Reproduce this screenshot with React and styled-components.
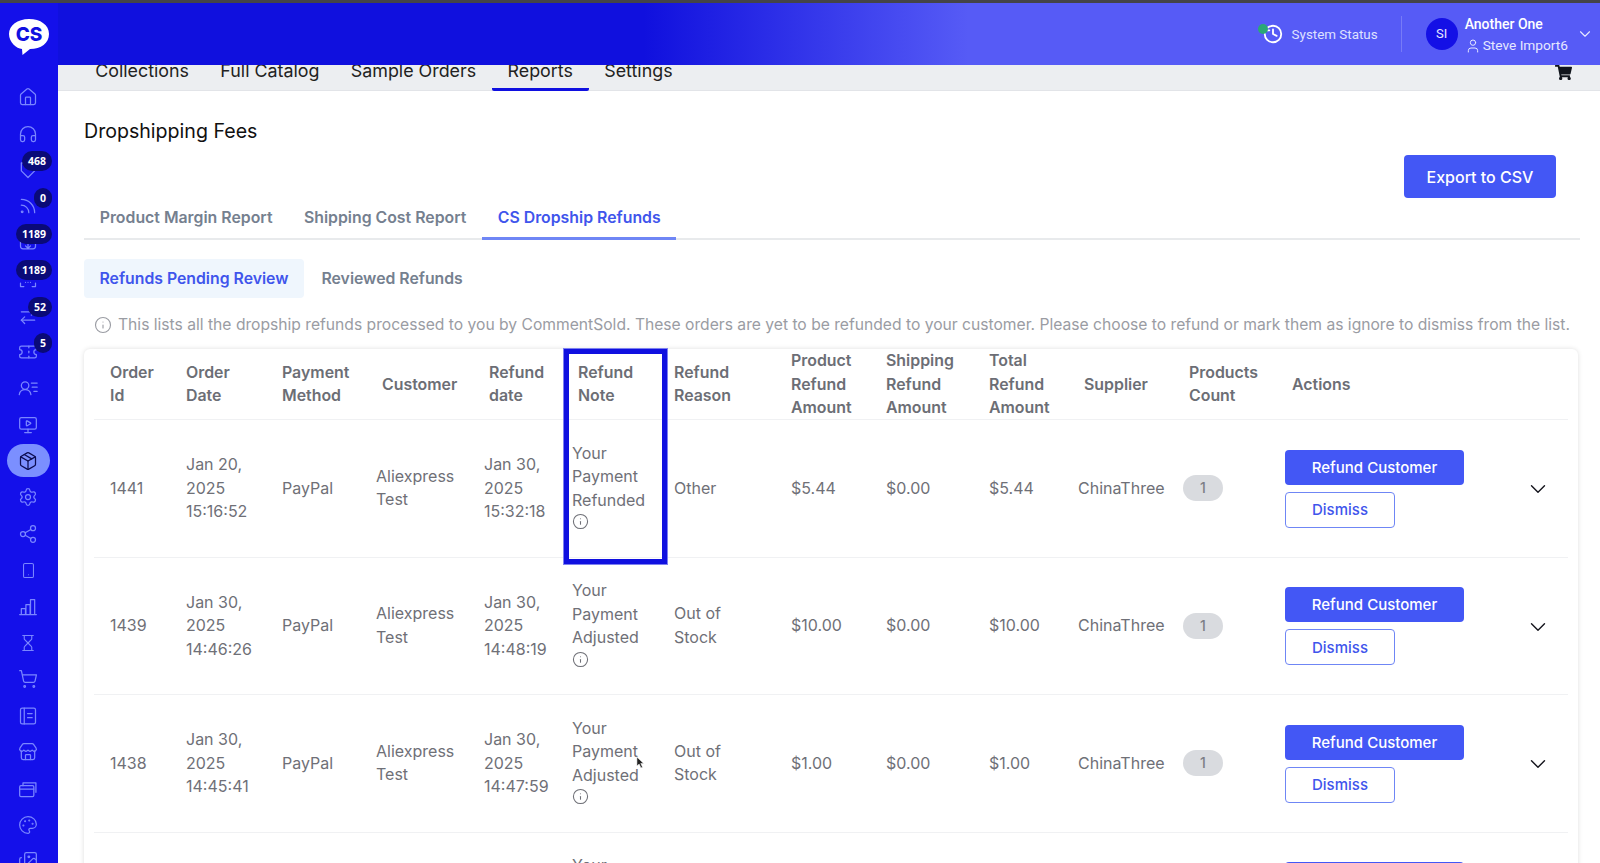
import React from 'react'
import styled, { createGlobalStyle } from 'styled-components'
import {
  House, Headphones, Rss, ArrowRightLeft, Ticket, MonitorPlay, Package,
  Settings, Share2, Smartphone, Hourglass, ShoppingCart, Store, Palette, Images, ChevronDown,
  User, History, Info,
} from 'lucide-react'
import { FaShoppingCart } from 'react-icons/fa'

const GlobalStyle = createGlobalStyle`
  html, body { margin: 0; padding: 0; background: #fff; }
  body { font-family: Inter, "Liberation Sans", sans-serif; overflow: hidden; }
  * { box-sizing: border-box; }
`

const Outline = ({ children, size, strokeWidth, ...rest }) => (
  <svg viewBox="0 0 24 24" width={size} height={size} fill="none" stroke="currentColor" strokeWidth={strokeWidth} strokeLinecap="round" strokeLinejoin="round" {...rest}>
    {children}
  </svg>
)

const TagDown = (props) => (
  <Outline {...props}><path d="M4 3.500v9.500l8 8 8-8V3.500z" /></Outline>
)

const BoxDown = (props) => (
  <Outline {...props}><path d="M3 4v12a3 3 0 003 3h12a3 3 0 003-3V4M12 9v9M9 15.500l3 3 3-3" /></Outline>
)

const ScanDots = (props) => (
  <Outline {...props}><path d="M3 17v4h4M17 21h4v-4M9 16h.01M12 16h.01M15 16h.01" /></Outline>
)

const UserLines = (props) => (
  <Outline {...props}>
    <circle cx="8.500" cy="9" r="4.500" />
    <path d="M1.500 20c.6-4 3.400-6 7-6s6.400 2 7 6M16 6h7M17 11h6M19 16h4" />
  </Outline>
)

const Bars = (props) => (
  <Outline {...props}><path d="M2 21h20M4 21v-7h5v7M9.500 21V9h5v12M15 21V3h5v18" /></Outline>
)

const Journal = (props) => (
  <Outline {...props}>
    <rect x="3" y="2.500" width="18" height="19" rx="2" />
    <path d="M7.500 2.500v19M11.500 9h5.500M11.500 14h5.500" />
  </Outline>
)

const Cards = (props) => (
  <Outline {...props}>
    <rect x="2" y="8" width="17" height="13" rx="1.500" />
    <path d="M2 12h17M6 4.500h15.500V16M6 4.500V8" />
  </Outline>
)

const navIcons = [
  { icon: House },
  { icon: Headphones },
  { icon: TagDown, badge: '468' },
  { icon: Rss, badge: '0' },
  { icon: BoxDown, badge: '1189' },
  { icon: ScanDots, badge: '1189' },
  { icon: ArrowRightLeft, badge: '52' },
  { icon: Ticket, badge: '5' },
  { icon: UserLines },
  { icon: MonitorPlay },
  { icon: Package, active: true },
  { icon: Settings },
  { icon: Share2 },
  { icon: Smartphone, size: 17 },
  { icon: Bars },
  { icon: Hourglass, size: 18 },
  { icon: ShoppingCart },
  { icon: Journal },
  { icon: Store },
  { icon: Cards },
  { icon: Palette },
  { icon: Images },
]

const columns = [
  { label: 'Order\nId' },
  { label: 'Order\nDate' },
  { label: 'Payment\nMethod' },
  { label: 'Customer', shift: 6 },
  { label: 'Refund\ndate', shift: 5 },
  { label: 'Refund\nNote', shift: 6 },
  { label: 'Refund\nReason' },
  { label: 'Product\nRefund\nAmount' },
  { label: 'Shipping\nRefund\nAmount' },
  { label: 'Total\nRefund\nAmount' },
  { label: 'Supplier', shift: 6 },
  { label: 'Products\nCount', shift: 6 },
  { label: 'Actions', shift: 7 },
  { label: '' },
]

const refunds = [
  { id: '1441', date: 'Jan 20,\n2025\n15:16:52', refunded: 'Jan 30,\n2025\n15:32:18', note: 'Your\nPayment\nRefunded', reason: 'Other', product: '$5.44', total: '$5.44' },
  { id: '1439', date: 'Jan 30,\n2025\n14:46:26', refunded: 'Jan 30,\n2025\n14:48:19', note: 'Your\nPayment\nAdjusted', reason: 'Out of\nStock', product: '$10.00', total: '$10.00' },
  { id: '1438', date: 'Jan 30,\n2025\n14:45:41', refunded: 'Jan 30,\n2025\n14:47:59', note: 'Your\nPayment\nAdjusted', reason: 'Out of\nStock', product: '$1.00', total: '$1.00' },
  { id: '1437', date: 'Jan 30,\n2025\n14:40:12', refunded: 'Jan 30,\n2025\n14:44:03', note: 'Your\nPayment\nAdjusted', reason: 'Out of\nStock', product: '$1.00', total: '$1.00' },
]

const App = () => (
  <Page>
    <GlobalStyle />
    <TopLine />
    <Shell>
      <Sidebar>
        <Logo viewBox="0 0 42 38">
          <path d="M21 1C9.500 1 1 7.500 1 16s7.500 14.500 13 15l.5 6 7.500-6c11 0 19-6 19-15S32.500 1 21 1z" fill="#fff" />
          <text x="21" y="23" textAnchor="middle" fontFamily="Inter, sans-serif" fontWeight="800" fontSize="19" fill="#1010e0">CS</text>
        </Logo>
        <SideList>
          {navIcons.map(({ icon: Icon, badge, active, size }, i) => (
            <SideItem key={i} $active={active}>
              <Icon size={size || 20} strokeWidth={1.5} />
              {badge && <SideBadge>{badge}</SideBadge>}
            </SideItem>
          ))}
        </SideList>
      </Sidebar>
      <Main>
        <Header>
          <StatusLink>
            <StatusIcon>
              <History size={22} strokeWidth={2} />
              <StatusDot />
            </StatusIcon>
            System Status
          </StatusLink>
          <Divider />
          <Avatar>SI</Avatar>
          <Account>
            <AccountName>Another One</AccountName>
            <AccountUser><User size={16} strokeWidth={1.5} />Steve Import6</AccountUser>
          </Account>
          <ChevronDown size={18} strokeWidth={1.5} />
        </Header>
        <NavBar>
          <NavItem>Collections</NavItem>
          <NavItem>Full Catalog</NavItem>
          <NavItem>Sample Orders</NavItem>
          <NavItem $active>Reports</NavItem>
          <NavItem>Settings</NavItem>
          <CartButton><FaShoppingCart size={17} /></CartButton>
        </NavBar>
        <Content>
          <Title>Dropshipping Fees</Title>
          <ExportRow>
            <ExportButton>Export to CSV</ExportButton>
          </ExportRow>
          <Tabs>
            <Tab>Product Margin Report</Tab>
            <Tab>Shipping Cost Report</Tab>
            <Tab $active>CS Dropship Refunds</Tab>
          </Tabs>
          <SubTabs>
            <SubTab $active>Refunds Pending Review</SubTab>
            <SubTab>Reviewed Refunds</SubTab>
          </SubTabs>
          <Notice>
            <Info size={18} strokeWidth={1.5} />
            This lists all the dropship refunds processed to you by CommentSold. These orders are yet to be refunded to your customer. Please choose to refund or mark them as ignore to dismiss from the list.
          </Notice>
          <Card>
            <Highlight />
            <HeadRow>
              {columns.map((col, i) => (
                <HeadCell key={i} $shift={col.shift}>{col.label}</HeadCell>
              ))}
            </HeadRow>
            {refunds.map((r) => (
              <Row key={r.id}>
                <Cell>{r.id}</Cell>
                <Cell>{r.date}</Cell>
                <Cell>PayPal</Cell>
                <Cell>{'Aliexpress\nTest'}</Cell>
                <Cell>{r.refunded}</Cell>
                <Cell>
                  {r.note}
                  <NoteIcon><Info size={17} strokeWidth={1.5} /></NoteIcon>
                </Cell>
                <Cell>{r.reason}</Cell>
                <Cell>{r.product}</Cell>
                <Cell>$0.00</Cell>
                <Cell>{r.total}</Cell>
                <Cell>ChinaThree</Cell>
                <Cell><CountBadge>1</CountBadge></Cell>
                <Actions>
                  <PrimaryButton>Refund Customer</PrimaryButton>
                  <OutlineButton>Dismiss</OutlineButton>
                </Actions>
                <Toggle><ChevronDown size={26} strokeWidth={1.3} /></Toggle>
              </Row>
            ))}
          </Card>
        </Content>
      </Main>
    </Shell>
    <Pointer viewBox="0 0 10 14"><path d="M1 1v10l2.500-2.200L5.500 13l1.800-.8-2-4.200H8.500z" fill="#222" stroke="#fff" strokeWidth=".6" /></Pointer>
  </Page>
)

const Page = styled.div`
  position: relative;
  height: 863px;
  overflow: hidden;
  display: flex;
  flex-direction: column;
`

const TopLine = styled.div`
  height: 3px;
  flex: none;
  background: #444448;
`

const Shell = styled.div`
  flex: 1;
  display: flex;
  min-height: 0;
`

const Sidebar = styled.aside`
  width: 58px;
  flex: none;
  background: #1410ea;
  display: flex;
  flex-direction: column;
  align-items: center;
  overflow: hidden;
`

const Logo = styled.svg`
  width: 42px;
  height: 38px;
  margin: 15px 1px 0 0;
  flex: none;
`

const SideList = styled.nav`
  margin-top: 23px;
  width: 100%;
  display: flex;
  flex-direction: column;
`

const SideItem = styled.div`
  position: relative;
  height: 36.4px;
  flex: none;
  padding-right: 2px;
  display: flex;
  align-items: center;
  justify-content: center;
  color: ${(p) => (p.$active ? '#0c0c50' : '#7a86ff')};
  &::before {
    content: ${(p) => (p.$active ? '""' : 'none')};
    position: absolute;
    left: 7px;
    right: 8px;
    top: 1px;
    bottom: 2px;
    border-radius: 17px;
    background: #7b8fff;
  }
  svg { position: relative; }
`

const SideBadge = styled.span`
  position: absolute;
  right: 6px;
  top: -0.500px;
  min-width: 18px;
  height: 20px;
  padding: 0 6px;
  border-radius: 10px;
  background: #0a0a78;
  color: #fff;
  font: 700 10.500px/20px "Noto Sans", sans-serif;
  text-align: center;
`

const Main = styled.main`
  flex: 1;
  min-width: 0;
  display: flex;
  flex-direction: column;
`

const Header = styled.header`
  height: 62px;
  flex: none;
  position: relative;
  z-index: 1;
  padding-right: 6px;
  display: flex;
  align-items: center;
  justify-content: flex-end;
  color: #e6e8ff;
  background: linear-gradient(90deg, #1010de 0%, #1010de 38%, #565bf6 59%, #565bf6 100%);
`

const StatusLink = styled.div`
  display: flex;
  align-items: center;
  gap: 8px;
  font: 400 13.400px Roboto, sans-serif;
  color: #dfe1ff;
`

const StatusIcon = styled.span`
  position: relative;
  display: flex;
  color: #fff;
`

const StatusDot = styled.i`
  position: absolute;
  left: -4px;
  top: 1px;
  width: 10px;
  height: 10px;
  border-radius: 50%;
  background: #2aa876;
`

const Divider = styled.div`
  width: 1px;
  height: 36px;
  margin: 0 24px 0 23px;
  background: rgba(255, 255, 255, 0.2);
`

const Avatar = styled.div`
  width: 32px;
  height: 32px;
  margin-right: 7px;
  border-radius: 50%;
  background: #1410e6;
  color: #e6e8ff;
  font: 400 13px/32px Roboto, sans-serif;
  text-align: center;
`

const Account = styled.div`
  display: flex;
  flex-direction: column;
  gap: 2px;
  padding-top: 2px;
  margin-right: 8px;
`

const AccountName = styled.div`
  font: 500 14px/19px Roboto, sans-serif;
  color: #fff;
`

const AccountUser = styled.div`
  display: flex;
  align-items: center;
  gap: 2px;
  font: 400 13.700px/19px Roboto, sans-serif;
`

const NavBar = styled.div`
  height: 26px;
  flex: none;
  padding: 0 28px 0 21.500px;
  display: flex;
  background: #eceef1;
  border-bottom: 1px solid #e2e4e8;
`

const NavItem = styled.div`
  height: 26px;
  padding: 0 15.700px;
  font-size: 17.850px;
  line-height: 12px;
  color: #222;
  border-bottom: 3px solid ${(p) => (p.$active ? '#1010e0' : 'transparent')};
  border-radius: 0 0 2px 2px;
`

const CartButton = styled.div`
  margin-left: auto;
  height: 16px;
  overflow: hidden;
  display: flex;
  align-items: flex-end;
  color: #10141c;
`

const Content = styled.div`
  padding: 0 20px 0 26px;
`

const Title = styled.h1`
  margin: 27px 0 0;
  font-size: 19.600px;
  font-weight: 400;
  line-height: 26px;
  color: #111;
`

const ExportRow = styled.div`
  display: flex;
  justify-content: flex-end;
  margin: 11px 24px 0 0;
`

const ExportButton = styled.button`
  width: 152px;
  height: 43px;
  border: 0;
  border-radius: 4px;
  background: #4357f5;
  color: #fff;
  font: 500 16px Inter, sans-serif;
`

const Tabs = styled.div`
  display: flex;
  border-bottom: 2px solid #e8eaec;
`

const Tab = styled.div`
  padding: 9px 15.700px 8px;
  margin-bottom: -2px;
  font-size: 15.850px;
  font-weight: 600;
  line-height: 22px;
  color: ${(p) => (p.$active ? '#3f55ec' : '#75808f')};
  border-bottom: 3px solid ${(p) => (p.$active ? '#6f86f5' : 'transparent')};
`

const SubTabs = styled.div`
  display: flex;
  gap: 2px;
  margin-top: 19px;
`

const SubTab = styled.div`
  height: 39px;
  padding: 0 15.500px;
  border-radius: 4px;
  font-size: 15.800px;
  font-weight: 600;
  line-height: 39px;
  color: ${(p) => (p.$active ? '#3f55ec' : '#75808f')};
  background: ${(p) => (p.$active ? '#eff6fd' : 'transparent')};
`

const Notice = styled.p`
  margin: 15px 0 0;
  padding-left: 10px;
  display: flex;
  align-items: center;
  gap: 6px;
  white-space: nowrap;
  font-size: 15.650px;
  line-height: 24px;
  color: #9a9ca3;
  svg { flex: none; }
`

const Card = styled.section`
  position: relative;
  margin-top: 12px;
  padding: 0 10px;
  width: 1494px;
  border-radius: 6px;
  background: #fff;
  box-shadow: 0 0 5px rgba(0, 0, 0, 0.13);
`

const Highlight = styled.div`
  position: absolute;
  left: 480px;
  top: 0;
  width: 103px;
  height: 215px;
  border: 5px solid #1010e0;
  outline: 1px solid #7d80f0;
  pointer-events: none;
`

const gridColumns = '76px 96px 94px 108px 88px 102px 117px 95px 103px 89px 105px 102px 240px 1fr'

const HeadRow = styled.div`
  display: grid;
  grid-template-columns: ${gridColumns};
  align-items: center;
  height: 71px;
  padding-left: 16px;
  border-bottom: 1px solid #f0f1f3;
`

const HeadCell = styled.div`
  padding-left: ${(p) => p.$shift || 0}px;
  white-space: pre-line;
  font-size: 15.900px;
  font-weight: 600;
  line-height: 23.500px;
  color: #6c6e75;
`

const Row = styled.div`
  display: grid;
  grid-template-columns: ${gridColumns};
  align-items: center;
  height: 137.500px;
  padding-left: 16px;
  border-bottom: 1px solid #f0f1f3;
`

const Cell = styled.div`
  white-space: pre-line;
  font-size: 16px;
  line-height: 23.500px;
  color: #6f7077;
`

const NoteIcon = styled.span`
  display: block;
  height: 22.500px;
  padding-top: 1px;
  color: #6f7077;
  svg { display: block; }
`

const CountBadge = styled.span`
  display: inline-block;
  width: 40px;
  height: 26px;
  border-radius: 13px;
  background: #d9dbdf;
  color: #7c7e85;
  font-size: 14px;
  font-weight: 500;
  line-height: 26px;
  text-align: center;
`

const Actions = styled.div`
  display: flex;
  flex-direction: column;
  align-items: flex-start;
  gap: 7px;
  padding-top: 1px;
`

const PrimaryButton = styled.button`
  width: 179px;
  height: 35px;
  border: 0;
  border-radius: 4px;
  background: #4357f5;
  color: #fff;
  font: 500 15px Inter, sans-serif;
`

const OutlineButton = styled.button`
  width: 110px;
  height: 36px;
  border: 1px solid #6f86f5;
  border-radius: 4px;
  background: #fff;
  color: #3f55ec;
  font: 500 15px Inter, sans-serif;
`

const Toggle = styled.div`
  display: flex;
  padding-top: 2px;
  color: #14141c;
`

const Pointer = styled.svg`
  position: absolute;
  left: 636px;
  top: 756px;
  width: 9px;
  height: 13px;
`

export default App
